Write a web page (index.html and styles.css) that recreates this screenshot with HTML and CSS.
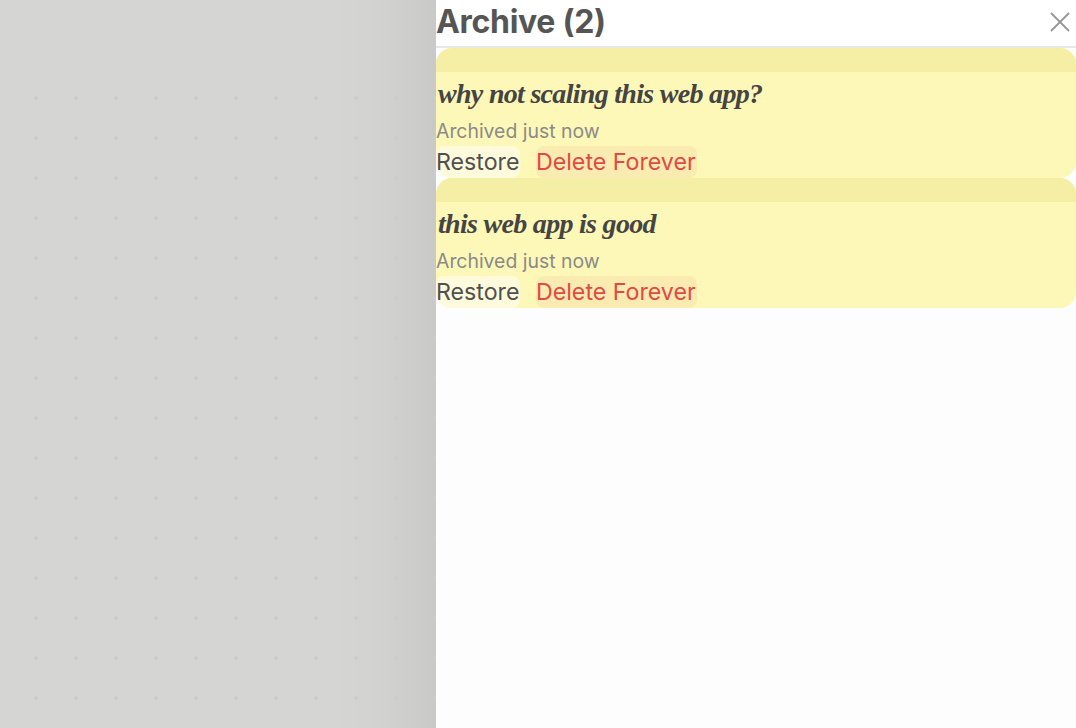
FILE: index.html
```html
<!DOCTYPE html>
<html lang="en">
<head>
<meta charset="utf-8">
<title>Archive</title>
<link rel="stylesheet" href="styles.css">
</head>
<body>
<main class="canvas"></main>
<aside class="panel">
  <header class="panel-head">
    <h1 class="panel-title">Archive (2)</h1>
    <button class="close" aria-label="Close">
      <svg width="20" height="20" viewBox="0 0 20 20"><path d="M1 1L19 19M19 1L1 19"/></svg>
    </button>
  </header>
  <section class="note">
    <div class="note-bar"></div>
    <p class="note-text">why not scaling this web app?</p>
    <p class="note-meta">Archived just now</p>
    <div class="note-actions">
      <button class="btn btn-restore">Restore</button>
      <button class="btn btn-delete">Delete Forever</button>
    </div>
  </section>
  <section class="note">
    <div class="note-bar"></div>
    <p class="note-text">this web app is good</p>
    <p class="note-meta">Archived just now</p>
    <div class="note-actions">
      <button class="btn btn-restore">Restore</button>
      <button class="btn btn-delete">Delete Forever</button>
    </div>
  </section>
</aside>
</body>
</html>
```

FILE: styles.css
```css
* { box-sizing: border-box; }
html, body { margin: 0; height: 100%; }
body {
  height: 728px;
  overflow: hidden;
  background-color: #d5d5d4;
  background-image: linear-gradient(to right, rgba(0,0,0,0) 330px, rgba(0,0,0,.012) 370px, rgba(0,0,0,.035) 410px, rgba(0,0,0,.06) 436px);
  font-family: "Inter", "Liberation Sans", sans-serif;
  display: flex;
}
.canvas {
  flex: 1;
  margin-top: 78px;
  background-image: radial-gradient(circle, #cccccb 1.6px, transparent 2.2px);
  background-size: 40px 40px;
  background-position: 16px 0;
}
.panel {
  width: 640px;
  height: 728px;
  background: #fdfdfd;
}
.panel-head {
  height: 48px;
  background: #fff;
  border-bottom: 2px solid #e8e8e8;
  display: flex;
  align-items: center;
  justify-content: space-between;
  padding-right: 6px;
}
.panel-title {
  margin: 0 0 3px;
  font-size: 32px;
  line-height: 42px;
  font-weight: 700;
  color: #555;
  letter-spacing: -0.3px;
}
.close {
  border: 0;
  background: none;
  padding: 0;
  margin-bottom: 2px;
  width: 20px;
  height: 20px;
  display: flex;
}
.close path { stroke: #969696; stroke-width: 1.8; fill: none; }
.note {
  height: 130px;
  background: #fef8b8;
  border-radius: 16px;
  overflow: hidden;
}
.note-bar { height: 24px; background: #f5efa6; }
.note-text {
  margin: 0;
  padding-left: 2px;
  height: 44px;
  font-family: "Liberation Serif", serif;
  font-style: italic;
  font-weight: 700;
  font-size: 28px;
  letter-spacing: -0.7px;
  line-height: 44px;
  color: #444;
}
.note-meta {
  margin: 0;
  height: 30px;
  font-size: 19.4px;
  line-height: 30px;
  color: #8a8a8a;
}
.note-actions { display: flex; gap: 16px; height: 32px; }
.btn {
  border: 0;
  padding: 0;
  height: 32px;
  border-radius: 8px;
  font-family: inherit;
  font-size: 23.2px;
  line-height: 32px;
}
.btn-restore { color: #505050; background: #fefbdc; width: 84px; text-align: left; }
.btn-delete { color: #e04a46; background: #faebb0; width: 161px; text-align: left; }
```
